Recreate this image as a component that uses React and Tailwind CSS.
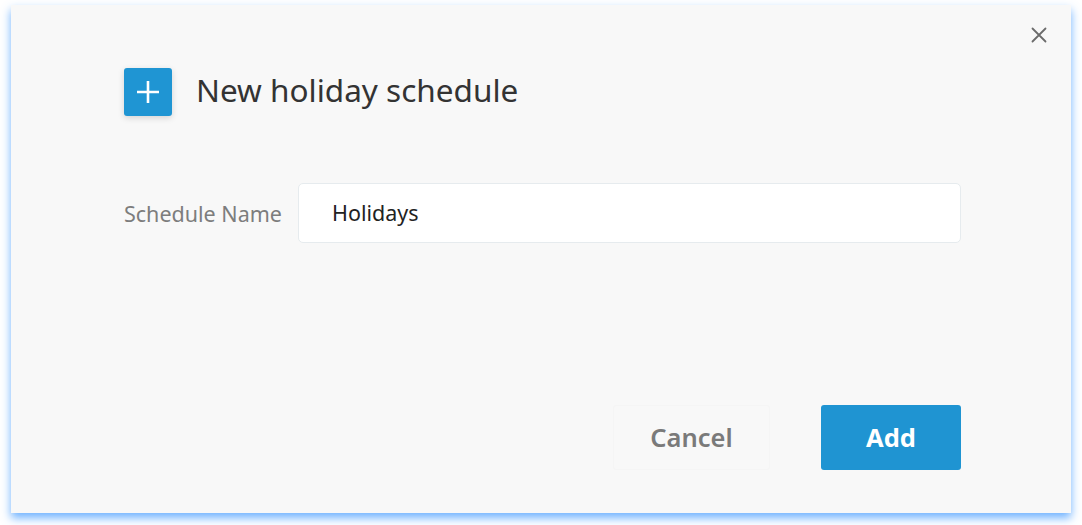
import React from "react";

export default function App() {
  const font = { fontFamily: '"Noto Sans", "Open Sans", sans-serif' };
  return (
    <div className="w-[1082px] h-[525px] bg-white pt-[5px] pl-[11px] overflow-hidden" style={font}>
      <div className="relative w-[1060px] h-[508px] bg-[#f8f8f8] shadow-[0_5px_9px_rgba(50,145,255,0.7)] flex flex-col pl-[113px] pr-[110px] pt-[63px]">
        <button className="absolute top-[22px] right-[24px] w-[16px] h-[16px] flex items-center justify-center text-[#6b6b6b]">
          <svg width="16" height="16" viewBox="0 0 16 16" fill="none" stroke="currentColor" strokeWidth="1.8" strokeLinecap="round">
            <path d="M1.5 1.5 L14.5 14.5 M14.5 1.5 L1.5 14.5" />
          </svg>
        </button>

        <div className="flex items-center gap-[24px]">
          <div className="w-[48px] h-[48px] rounded-[3px] bg-[#1f95d3] shadow-[0_2px_6px_rgba(0,0,0,0.15)] flex items-center justify-center">
            <svg width="22" height="22" viewBox="0 0 22 22" stroke="white" strokeWidth="2.6" fill="none">
              <path d="M11 0 V22 M0 11 H22" />
            </svg>
          </div>
          <h1 className="text-[31.5px] text-[#333333] leading-none -mt-[4px]">New holiday schedule</h1>
        </div>

        <div className="flex items-center mt-[67px]">
          <label className="w-[174px] text-[21.5px] text-[#7d7d7d] mt-[2px]">Schedule Name</label>
          <div className="w-[663px] h-[60px] bg-white border border-[#e6ebee] rounded-[5px] flex items-center pl-[33px] text-[21.5px] text-[#222222]">
            Holidays
          </div>
        </div>

        <div className="flex justify-end items-center gap-[51px] mt-[162px]">
          <button className="w-[157px] h-[65px] rounded-[3px] text-[25.5px] font-semibold text-[#7a7a7a] border border-[#f5f5f5]">
            Cancel
          </button>
          <button className="w-[140px] h-[65px] rounded-[3px] bg-[#1f94d2] text-[25.5px] font-bold text-white">
            Add
          </button>
        </div>
      </div>
    </div>
  );
}
